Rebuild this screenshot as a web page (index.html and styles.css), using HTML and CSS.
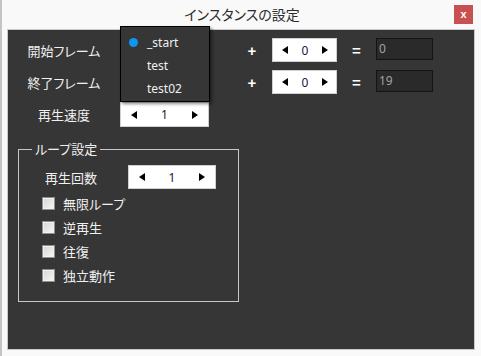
FILE: index.html
```html
<!DOCTYPE html>
<html lang="ja">
<head>
    <meta charset="UTF-8">
    <meta name="viewport" content="width=device-width, initial-scale=1.0">
    <title>インスタンスの設定</title>
    <link rel="stylesheet" href="styles.css">
</head>
<body>
    <div class="window">
        <div class="titlebar">
            <span></span>
            <span class="title">インスタンスの設定</span>
            <button class="close">x</button>
        </div>

        <div class="panel">
            <div class="frames">
                <span class="label">開始フレーム</span>
                <span class="combo"></span>
                <span></span>
                <span class="op">+</span>
                <div class="spinner small">
                    <svg width="6" height="8" viewBox="0 0 6 8"><polygon points="6,0 6,8 0,4"/></svg>
                    <span class="value">0</span>
                    <svg width="6" height="8" viewBox="0 0 6 8"><polygon points="0,0 0,8 6,4"/></svg>
                </div>
                <span class="op">=</span>
                <span class="result">0</span>

                <span class="label">終了フレーム</span>
                <span class="combo"></span>
                <span></span>
                <span class="op">+</span>
                <div class="spinner small">
                    <svg width="6" height="8" viewBox="0 0 6 8"><polygon points="6,0 6,8 0,4"/></svg>
                    <span class="value">0</span>
                    <svg width="6" height="8" viewBox="0 0 6 8"><polygon points="0,0 0,8 6,4"/></svg>
                </div>
                <span class="op">=</span>
                <span class="result">19</span>

                <span class="label">再生速度</span>
                <div class="spinner tall">
                    <svg width="6" height="8" viewBox="0 0 6 8"><polygon points="6,0 6,8 0,4"/></svg>
                    <span class="value">1</span>
                    <svg width="6" height="8" viewBox="0 0 6 8"><polygon points="0,0 0,8 6,4"/></svg>
                </div>
            </div>

            <fieldset class="loop">
                <legend>ループ設定</legend>
                <div class="count-row">
                    <span class="count-label">再生回数</span>
                    <div class="spinner">
                        <svg width="6" height="8" viewBox="0 0 6 8"><polygon points="6,0 6,8 0,4"/></svg>
                        <span class="value">1</span>
                        <svg width="6" height="8" viewBox="0 0 6 8"><polygon points="0,0 0,8 6,4"/></svg>
                    </div>
                </div>
                <label class="check"><span class="box"></span>無限ループ</label>
                <label class="check"><span class="box"></span>逆再生</label>
                <label class="check"><span class="box"></span>往復</label>
                <label class="check"><span class="box"></span>独立動作</label>
            </fieldset>
        </div>

        <!-- open dropdown of the start-frame combo -->
        <ul class="dropdown">
            <li class="selected">_start</li>
            <li>test</li>
            <li>test02</li>
        </ul>
    </div>
</body>
</html>
```

FILE: styles.css
```css
body {
    margin: 0;
    font-family: "Noto Sans", "Noto Sans CJK JP", sans-serif;
    font-feature-settings: "palt";
    background-color: #f9f9f9;
}

.window {
    position: relative;
    width: 479px;
    height: 356px;
    border-left: 2px solid #c4c4c4;
    background-color: #f9f9f9;
}

.titlebar {
    height: 29px;
    display: grid;
    grid-template-columns: 1fr auto 1fr;
    align-items: start;
}

.title {
    font-size: 14px;
    color: #2b2b2b;
    line-height: 29px;
    margin-left: 1px;
}

.close {
    justify-self: end;
    margin: 5px 8px 0 0;
    width: 19px;
    height: 19px;
    padding: 0;
    border: none;
    background-color: #c75050;
    color: #fff;
    font-family: "Liberation Sans", sans-serif;
    font-size: 11px;
    font-weight: bold;
    line-height: 17px;
}

.panel {
    margin-left: 5px;
    width: 466px;
    height: 319px;
    border: 1px solid #c9c9c9;
    background-color: #363636;
    color: #f0f0f0;
    font-size: 13px;
}

.frames {
    display: grid;
    grid-template-columns: 112px 89px 23px 40px 65px 39px 57px;
    grid-template-rows: 24px 24px 25px;
    row-gap: 8px;
    align-items: center;
    padding-top: 8px;
}

.label {
    text-align: center;
}

.op {
    text-align: center;
    font-family: "Liberation Sans", sans-serif;
    font-weight: bold;
    font-size: 15px;
    color: #fff;
}

.spinner {
    display: flex;
    justify-content: space-between;
    align-items: center;
    box-sizing: border-box;
    width: 88px;
    height: 24px;
    padding: 0 10px;
    background-color: #fff;
    border: 1px solid #d0d0d0;
}

.spinner.small {
    width: 65px;
    padding: 0 8px 0 9px;
}

.spinner.tall {
    width: 89px;
    height: 25px;
}

.spinner svg {
    fill: #000;
}

.value {
    color: #102040;
    font-size: 12px;
}

.result {
    box-sizing: border-box;
    width: 57px;
    height: 22px;
    align-self: start;
    padding-left: 2px;
    background-color: #2a2a2a;
    border: 1px solid #141414;
    color: #a3a3a3;
    font-size: 12px;
    line-height: 20px;
}

.loop {
    box-sizing: border-box;
    width: 221px;
    margin: 14px 0 0 10px;
    padding: 0 0 14px 0;
    border: 1px solid #c8c8c8;
}

.loop legend {
    margin-left: 13px;
    padding: 0 3px;
    line-height: 17px;
}

.count-row {
    display: flex;
    align-items: center;
    margin-top: 7px;
}

.count-label {
    width: 104px;
    margin-right: 5px;
    text-align: center;
}

.check {
    display: flex;
    align-items: center;
    gap: 8px;
    height: 24px;
    padding-left: 23px;
}

.count-row + .check {
    margin-top: 2px;
}

.box {
    box-sizing: border-box;
    width: 13px;
    height: 13px;
    border: 1px solid #8e8e8e;
    background: linear-gradient(135deg, #d4d4d4, #f7f7f7);
    box-shadow: inset 0 0 0 1px #f2f2f2;
}

.dropdown {
    position: absolute;
    left: 118px;
    top: 26px;
    box-sizing: border-box;
    width: 90px;
    height: 76px;
    margin: 0;
    padding: 4px 0 0 0;
    list-style: none;
    background-color: #363636;
    border: 1px solid #000;
    box-shadow: 2px 2px 3px rgba(0, 0, 0, 0.45);
    color: #f0f0f0;
    font-size: 12px;
}

.dropdown li {
    position: relative;
    height: 23px;
    line-height: 23px;
    padding-left: 26px;
}

.dropdown li.selected::before {
    content: "";
    position: absolute;
    left: 8px;
    top: 7px;
    width: 9px;
    height: 9px;
    border-radius: 50%;
    background-color: #0a96f2;
}
```
